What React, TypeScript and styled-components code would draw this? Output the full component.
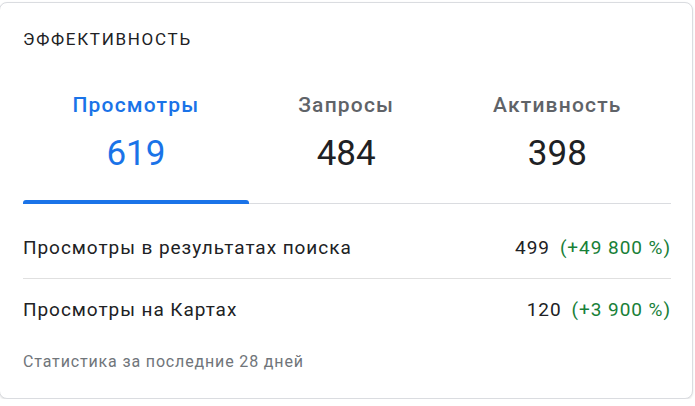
import React from "react";
import styled, { createGlobalStyle } from "styled-components";

const GlobalStyle = createGlobalStyle`
  body {
    margin: 0;
    background: #ffffff;
    font-family: Roboto, "Liberation Sans", Arial, sans-serif;
  }
`;

const tabs = [
  { label: "Просмотры", value: "619" },
  { label: "Запросы", value: "484" },
  { label: "Активность", value: "398" },
];

const rows = [
  { label: "Просмотры в результатах поиска", value: "499", change: "(+49 800 %)" },
  { label: "Просмотры на Картах", value: "120", change: "(+3 900 %)" },
];

const App: React.FC = () => {
  const active = 0;
  return (
    <>
      <GlobalStyle />
      <Card>
        <Title>ЭФФЕКТИВНОСТЬ</Title>
        <TabBar>
          {tabs.map((tab, i) => (
            <Tab key={tab.label} active={i === active}>
              <TabLabel active={i === active}>{tab.label}</TabLabel>
              <TabValue active={i === active}>{tab.value}</TabValue>
            </Tab>
          ))}
        </TabBar>
        <Rows>
          {rows.map((row) => (
            <Row key={row.label}>
              <span>{row.label}</span>
              <RowValue>
                {row.value}
                <Change>{row.change}</Change>
              </RowValue>
            </Row>
          ))}
        </Rows>
        <Footer>Статистика за последние 28 дней</Footer>
      </Card>
    </>
  );
};

export default App;

const Card = styled.div`
  box-sizing: border-box;
  width: 694px;
  height: 397px;
  margin: 2px 0 0 -1px;
  padding: 0 21px 0 23px;
  border: 1px solid #dadce0;
  border-radius: 8px;
  box-shadow: 0 1px 2px rgba(60, 64, 67, 0.15);
  background: #fff;
  display: flex;
  flex-direction: column;
`;

const Title = styled.div`
  margin-top: 26px;
  font-size: 17px;
  line-height: 20px;
  letter-spacing: 1.7px;
  color: #202124;
`;

const TabBar = styled.div`
  display: flex;
  margin-top: 44px;
  border-bottom: 1px solid #dadce0;
`;

const Tab = styled.div<{ active: boolean }>`
  flex: 1 1 auto;
  display: flex;
  flex-direction: column;
  align-items: center;
  height: 110px;
  position: relative;

  &::after {
    content: "";
    display: ${({ active }) => (active ? "block" : "none")};
    position: absolute;
    left: 0;
    right: 0;
    bottom: -1px;
    height: 4px;
    border-radius: 3px 3px 0 0;
    background: #1a73e8;
  }
`;

const TabLabel = styled.div<{ active: boolean }>`
  padding: 0 40px;
  font-size: 21px;
  line-height: 24px;
  font-weight: 500;
  letter-spacing: 1.2px;
  color: ${({ active }) => (active ? "#1a73e8" : "#5f6368")};
`;

const TabValue = styled.div<{ active: boolean }>`
  margin-top: 17px;
  font-size: 35px;
  line-height: 40px;
  color: ${({ active }) => (active ? "#1a73e8" : "#202124")};
`;

const Rows = styled.div`
  display: flex;
  flex-direction: column;
  padding-top: 13px;
`;

const Row = styled.div`
  display: flex;
  justify-content: space-between;
  align-items: center;
  padding: 20px 0 19px;
  line-height: 22px;
  border-bottom: 1px solid #e0e0e0;
  font-size: 19px;
  letter-spacing: 0.95px;
  color: #202124;

  &:last-child {
    border-bottom: none;
  }
`;

const RowValue = styled.div`
  display: flex;
  gap: 10px;
`;

const Change = styled.span`
  color: #188038;
`;

const Footer = styled.div`
  margin-top: 12px;
  font-size: 16px;
  line-height: 20px;
  letter-spacing: 0.85px;
  color: #70757a;
`;
